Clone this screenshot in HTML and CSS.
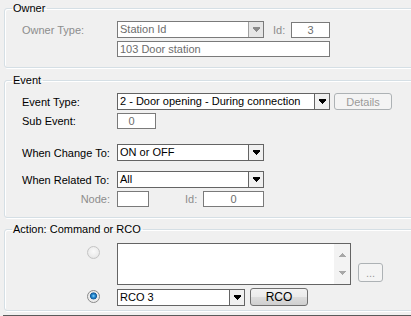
FILE: index.html
```html
<!DOCTYPE html>
<html lang="en">

<head>
  <meta charset="utf-8">
  <title>Event action</title>
  <link rel="stylesheet" href="styles.css">
</head>

<body>
  <fieldset class="group owner">
    <legend>Owner</legend>
    <div class="row">
      <span class="label dim">Owner Type:</span>
      <div class="combo disabled w-md">
        <span class="value">Station Id</span>
        <span class="drop"><svg width="7" height="5" viewBox="0 0 7 5"><path d="M0 0h7v2h-1v1h-1v1h-1v1h-1v-1h-1v-1h-1v-1h-1z"/></svg></span>
      </div>
      <span class="id-label dim">Id:</span>
      <div class="box disabled num w-id">3</div>
    </div>
    <div class="row gap-sm">
      <span class="label"></span>
      <div class="box disabled w-lg">103 Door station</div>
    </div>
  </fieldset>

  <fieldset class="group event">
    <legend>Event</legend>
    <div class="row">
      <span class="label">Event Type:</span>
      <div class="combo w-lg">
        <span class="value">2 - Door opening - During connection</span>
        <span class="drop"><svg width="7" height="5" viewBox="0 0 7 5"><path d="M0 0h7v2h-1v1h-1v1h-1v1h-1v-1h-1v-1h-1v-1h-1z"/></svg></span>
      </div>
      <button class="btn disabled details">Details</button>
    </div>
    <div class="row gap-sm">
      <span class="label">Sub Event:</span>
      <div class="box disabled num sub">0</div>
    </div>
    <div class="row gap-lg">
      <span class="label">When Change To:</span>
      <div class="combo w-md">
        <span class="value">ON or OFF</span>
        <span class="drop"><svg width="7" height="5" viewBox="0 0 7 5"><path d="M0 0h7v2h-1v1h-1v1h-1v1h-1v-1h-1v-1h-1v-1h-1z"/></svg></span>
      </div>
    </div>
    <div class="row gap-md">
      <span class="label">When Related To:</span>
      <div class="combo w-md">
        <span class="value">All</span>
        <span class="drop"><svg width="7" height="5" viewBox="0 0 7 5"><path d="M0 0h7v2h-1v1h-1v1h-1v1h-1v-1h-1v-1h-1v-1h-1z"/></svg></span>
      </div>
    </div>
    <div class="row gap-sm">
      <span class="label right dim">Node:</span>
      <div class="box disabled w-node"></div>
      <span class="id-label node-id dim">Id:</span>
      <div class="box disabled num w-nid">0</div>
    </div>
  </fieldset>

  <fieldset class="group action">
    <legend>Action: Command or RCO</legend>
    <div class="row top">
      <span class="radio-cell"><span class="radio off"></span></span>
      <div class="memo">
        <div class="scroll">
          <svg width="7" height="4" viewBox="0 0 7 4"><path d="M3 0h1v1h1v1h1v1h1v1h-7v-1h1v-1h1v-1h1z"/></svg>
          <svg width="7" height="4" viewBox="0 0 7 4"><path d="M0 0h7v1h-1v1h-1v1h-1v1h-1v-1h-1v-1h-1v-1h-1z"/></svg>
        </div>
      </div>
      <button class="btn disabled more">...</button>
    </div>
    <div class="row gap-sm">
      <span class="radio-cell"><span class="radio on"></span></span>
      <div class="combo w-rco">
        <span class="value">RCO 3</span>
        <span class="drop"><svg width="7" height="5" viewBox="0 0 7 5"><path d="M0 0h7v2h-1v1h-1v1h-1v1h-1v-1h-1v-1h-1v-1h-1z"/></svg></span>
      </div>
      <button class="btn rco">RCO</button>
    </div>
  </fieldset>

  <div class="status"></div>
</body>

</html>
```

FILE: styles.css
```css
* {
  box-sizing: border-box;
}

html,
body {
  overflow: hidden;
}

body {
  width: 411px;
  height: 316px;
  margin: 0;
  padding-top: 2px;
  background-color: #f0f0f0;
  font-family: "Liberation Sans", Arial, sans-serif;
  font-size: 11px;
  color: #000;
}

/* group boxes */
.group {
  width: 440px;
  min-inline-size: 0;
  margin: 0 0 0 4px;
  padding: 6px 0 10px 17px;
  border: 1px solid #d5dfe5;
  border-radius: 3px;
  box-shadow: inset 1px 1px 0 #fff, 1px 1px 0 #fff;
}

.group legend {
  margin-left: -10px;
  padding: 0 2px 0 1px;
  line-height: 13px;
}

.event {
  margin-top: 6px;
}

.action {
  margin-top: 5px;
  padding-top: 7px;
  padding-bottom: 4px;
}

/* rows */
.row {
  display: flex;
  align-items: center;
}

.row.top {
  align-items: flex-start;
}

.gap-sm {
  margin-top: 3px;
}

.gap-md {
  margin-top: 10px;
}

.gap-lg {
  margin-top: 15px;
}

.label {
  flex: none;
  width: 95px;
}

.label.right {
  padding-right: 7px;
  text-align: right;
}

.dim {
  color: #8d8d8d;
}

.id-label {
  flex: none;
  width: 18px;
  margin-left: 9px;
}

.node-id {
  margin-left: 36px;
}

/* edit boxes */
.box {
  flex: none;
  height: 16px;
  padding: 0 2px;
  border: 1px solid #646464;
  background-color: #fff;
  line-height: 14px;
  white-space: nowrap;
  overflow: hidden;
}

.box.disabled {
  color: #6d6d6d;
  border-color: #7a7a7a;
}

.box.num {
  text-align: center;
}

.w-id {
  width: 39px;
}

.w-lg {
  width: 213px;
}

.w-md {
  width: 147px;
}

.w-node {
  width: 32px;
}

.w-nid {
  width: 61px;
}

.w-rco {
  width: 128px;
}

.sub {
  width: 39px;
  padding-right: 12px;
}

/* combo boxes */
.combo {
  flex: none;
  display: flex;
  height: 17px;
  border: 1px solid #646464;
  background-color: #fff;
}

.combo .value {
  flex: 1;
  padding-left: 2px;
  line-height: 15px;
  white-space: nowrap;
  overflow: hidden;
}

.combo .drop {
  flex: none;
  display: flex;
  align-items: center;
  justify-content: center;
  width: 15px;
  border-left: 1px solid #646464;
  background-color: #f0f0f0;
}

.combo svg {
  shape-rendering: crispEdges;
  fill: #000;
}

.combo.disabled {
  border-color: #7a7a7a;
  color: #6d6d6d;
}

.combo.disabled .drop {
  border-left-color: #a0a0a0;
  background-color: #e6e6e6;
}

.combo.disabled svg {
  fill: #8a8a8a;
}

/* buttons */
.btn {
  flex: none;
  width: 58px;
  height: 18px;
  padding: 0;
  border: 1px solid #707070;
  border-radius: 3px;
  background: linear-gradient(#f2f2f2 0, #ebebeb 50%, #dddddd 50%, #cfcfcf 100%);
  font-family: inherit;
  font-size: 12px;
  color: #000;
}

.btn.disabled {
  border-color: #adb2b5;
  background: #f4f4f4;
  color: #9a9a9a;
  font-size: 11px;
}

.details {
  height: 17px;
  margin-left: 4px;
}

.more {
  width: 25px;
  height: 19px;
  margin: 20px 0 0 7px;
  line-height: 10px;
}

.rco {
  margin-left: 5px;
}

/* action group */
.radio-cell {
  flex: none;
  width: 95px;
  padding-left: 65px;
}

.radio {
  display: block;
  width: 13px;
  height: 13px;
  border-radius: 50%;
  border: 1px solid #b5b5b5;
  background: radial-gradient(circle at 50% 40%, #fff 0, #eaeaea 60%, #d4d4d4 100%);
}

.radio.off {
  margin-top: 3px;
  border-color: #c4c4c4;
  background: radial-gradient(circle at 50% 40%, #fafafa 0, #ececec 60%, #dcdcdc 100%);
}

.radio.on {
  margin-top: -2px;
  border-color: #8a8a8a;
  background: radial-gradient(circle at 50% 45%, #8fd8ff 0, #2a8fd6 1.5px, #125a9a 3.2px, #e9e9e9 3.8px, #f4f4f4 100%);
}

.memo {
  flex: none;
  display: flex;
  justify-content: flex-end;
  width: 234px;
  height: 42px;
  border: 1px solid #646464;
  background-color: #fff;
}

.scroll {
  display: flex;
  flex-direction: column;
  align-items: center;
  justify-content: space-between;
  width: 16px;
  padding: 9px 0 9px;
  background-color: #f3f3f3;
}

.scroll svg {
  shape-rendering: crispEdges;
  fill: #a8a8a8;
}

/* status field below the form */
.status {
  width: 440px;
  height: 20px;
  margin: 4px 0 0 3px;
  border-top: 1px solid #5a5a5a;
  border-left: 1px solid #5a5a5a;
  background-color: #fff;
}
```
